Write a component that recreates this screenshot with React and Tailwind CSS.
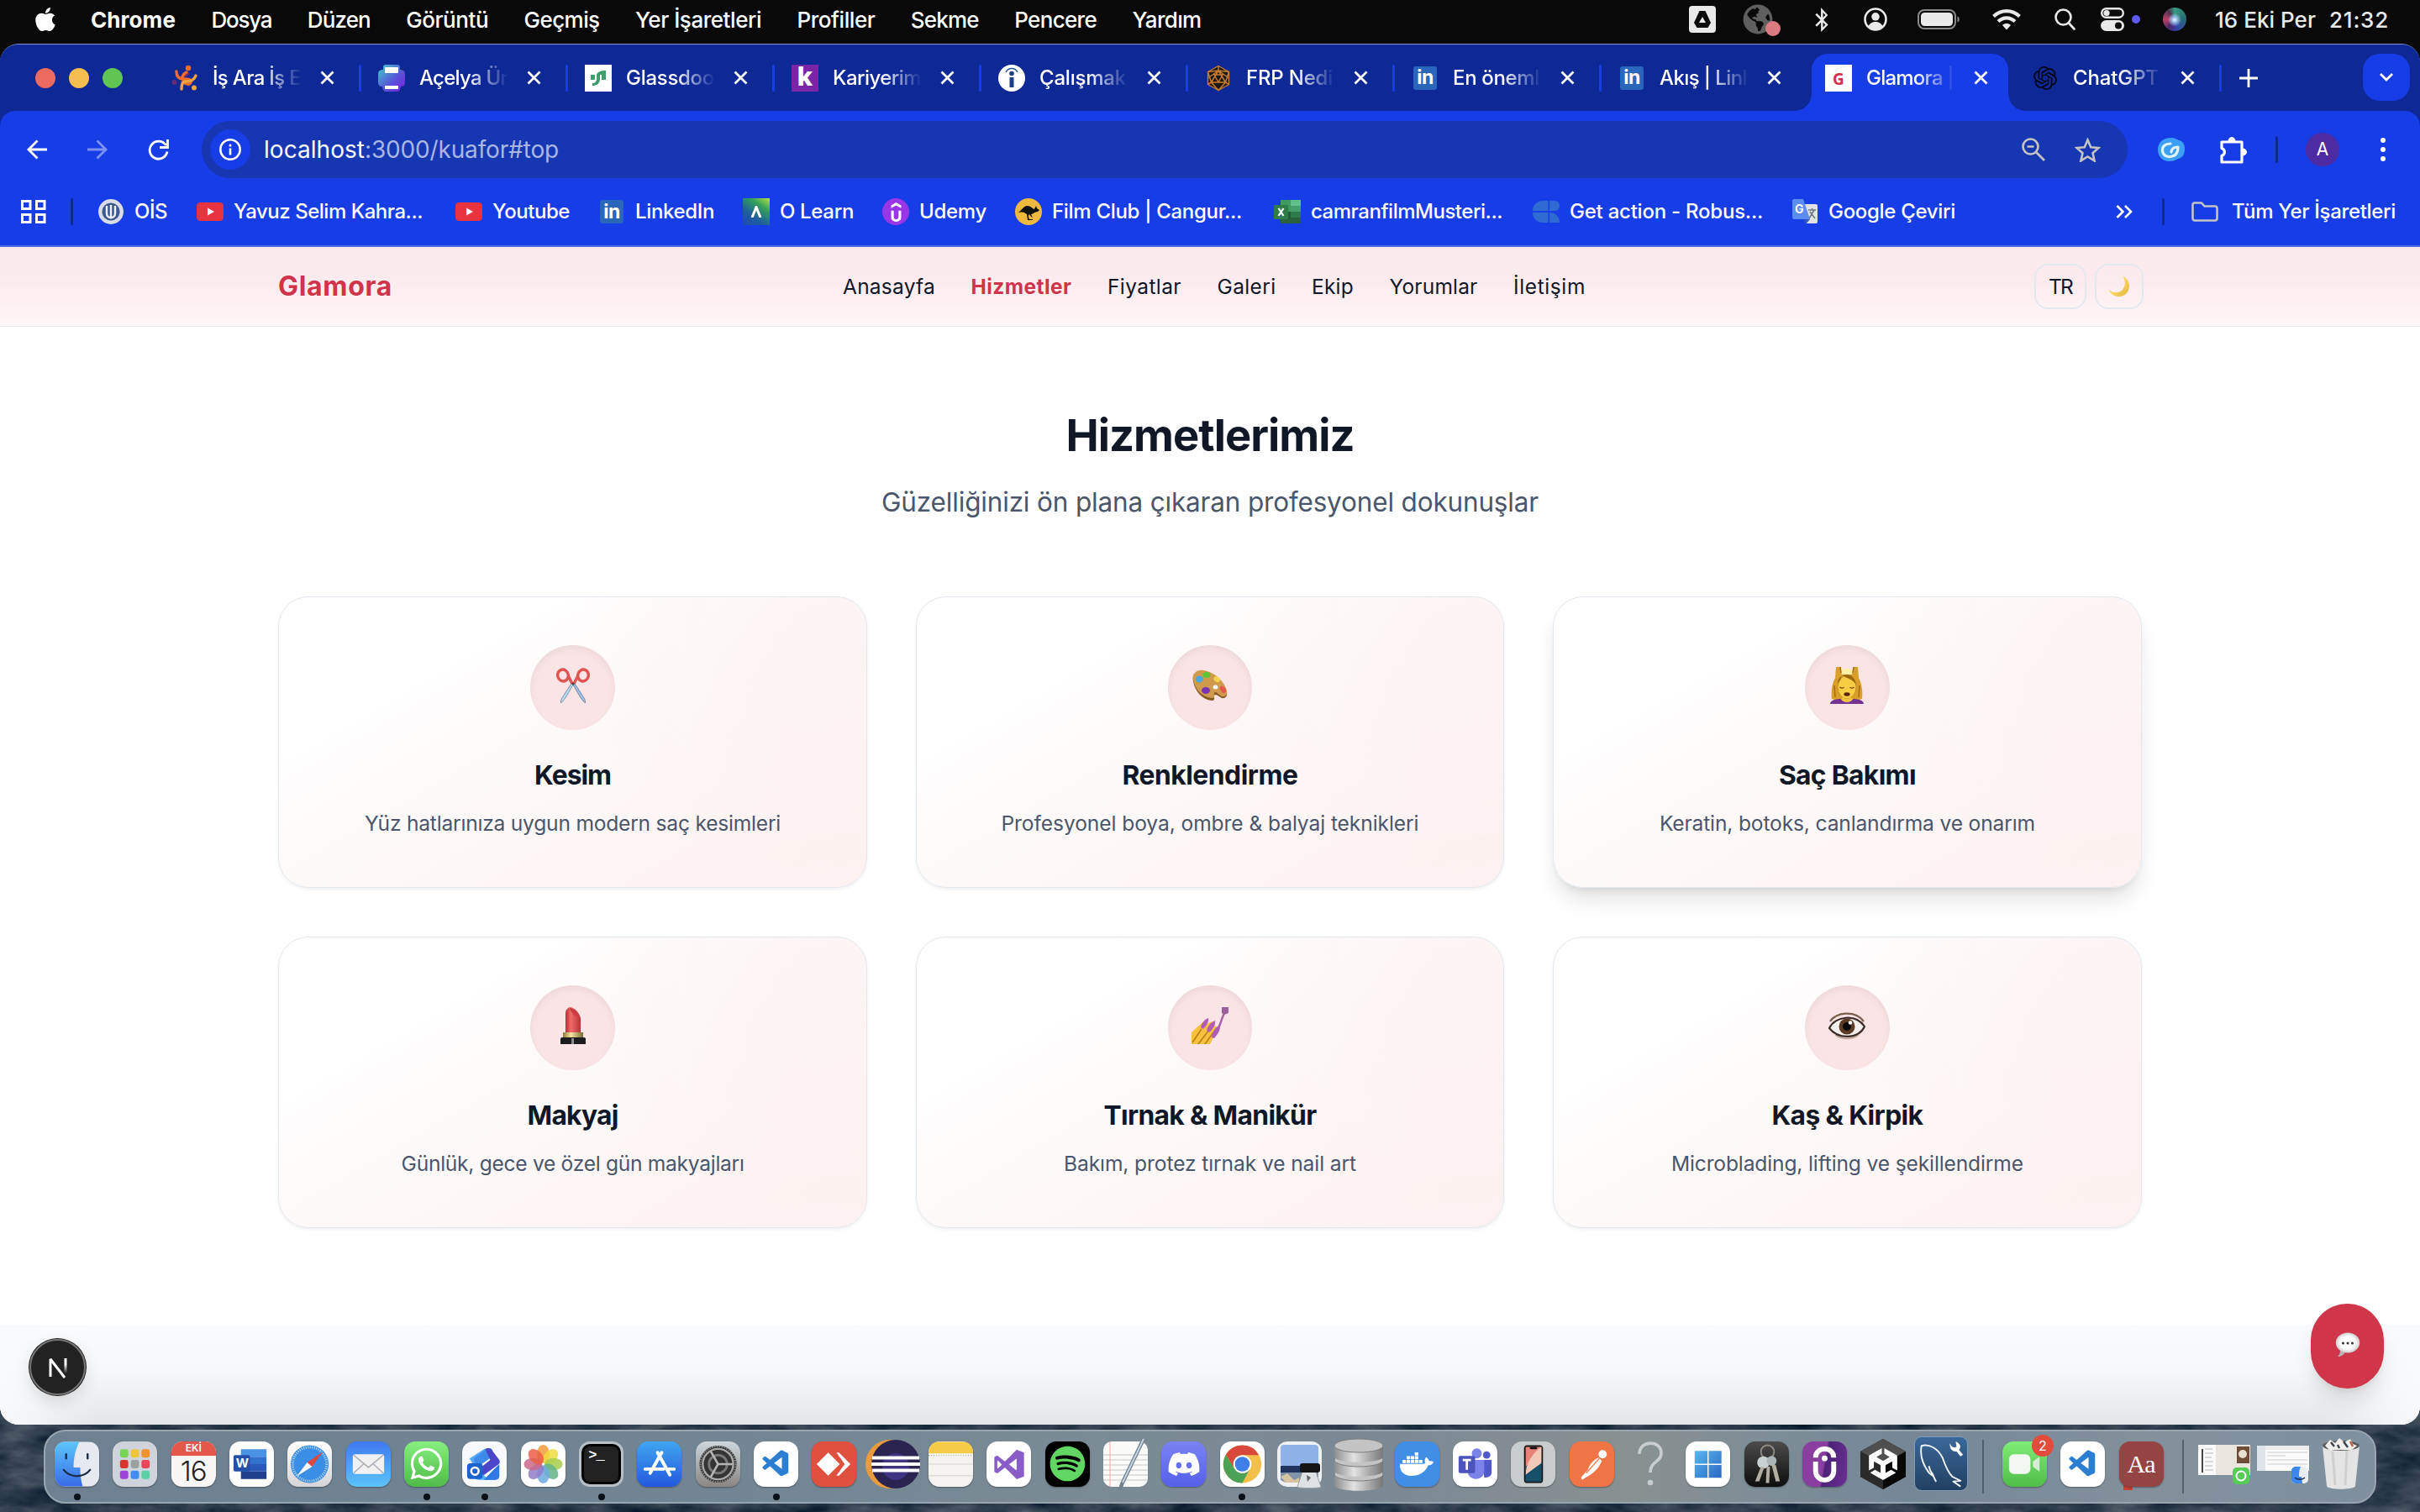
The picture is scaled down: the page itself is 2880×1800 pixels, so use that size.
import { useLayoutEffect, useRef, useState } from "react";
import { FaApple, FaWhatsapp, FaSpotify, FaDiscord, FaDocker, FaBluetoothB, FaGlobeAmericas } from "react-icons/fa";
import { SiOpenai, SiUdemy, SiUnity } from "react-icons/si";
import { VscVscode } from "react-icons/vsc";
import { DiVisualstudio } from "react-icons/di";

// One-line label whose tracking is tuned so that it fills the width `w`.
function Label({ w, className = "", children }) {
  const ref = useRef(null);
  const [spacing, setSpacing] = useState(0);
  useLayoutEffect(() => {
    const natural = ref.current.getBoundingClientRect().width;
    setSpacing((w - natural) / ref.current.textContent.length);
  }, [w]);
  return (
    <span ref={ref} className={"inline-block shrink-0 whitespace-nowrap " + className} style={{ letterSpacing: spacing + "px" }}>
      {children}
    </span>
  );
}

/* ---------- menu bar ---------- */

const menus = [
  ["Dosya", 72], ["Düzen", 75], ["Görüntü", 98], ["Geçmiş", 90], ["Yer İşaretleri", 150],
  ["Profiller", 93], ["Sekme", 81], ["Pencere", 98], ["Yardım", 82],
];

function MenuBar() {
  return (
    <div className="flex h-[52px] shrink-0 items-center bg-[#090909] pb-[6px] text-[26px] text-white">
      <FaApple className="ml-[38px] h-[32px] w-[32px] shrink-0" />
      <Label w={101} className="ml-[38px] font-bold">Chrome</Label>
      {menus.map(([t, w]) => <Label key={t} w={w} className="ml-[42.400px] font-medium">{t}</Label>)}
      <div className="ml-auto flex items-center pr-[37px] text-[#e9e9e9]">
        <svg viewBox="0 0 32 32" className="h-8 w-8"><rect width="32" height="32" rx="4" fill="#e9e9e9" /><path d="M12.500 6h7l6.500 14-3.500 6h-13L6 20z" fill="#090909" /><path d="M16 13l4 7h-8z" fill="#e9e9e9" /></svg>
        <span className="relative ml-8 block h-9 w-[45px]">
          <FaGlobeAmericas className="h-9 w-9 text-[#5f5f5f]" />
          <span className="absolute -bottom-[2px] right-0 h-[18px] w-[18px] rounded-full bg-[#d97b80]" />
        </span>
        <FaBluetoothB className="ml-[37px] h-[29px] w-[24px]" />
        <svg viewBox="0 0 28 28" className="ml-[38px] h-7 w-7"><circle cx="14" cy="14" r="12.500" fill="none" stroke="currentColor" strokeWidth="2.600" /><circle cx="14" cy="10.800" r="4.800" fill="currentColor" /><path d="M5.500 22.500c1.500-4 5-5.500 8.500-5.500s7 1.500 8.500 5.500c-4 4.500-13 4.500-17 0z" fill="currentColor" /></svg>
        <svg viewBox="0 0 51 24" className="ml-[36px] h-6 w-[51px]"><rect x="1" y="1" width="44" height="22" rx="7" fill="none" stroke="#8a8a8a" strokeWidth="2" /><rect x="4" y="4" width="38" height="16" rx="4.500" fill="#e9e9e9" /><path d="M47.500 8.500c3 .5 3 6.500 0 7z" fill="#8a8a8a" /></svg>
        <svg viewBox="0 0 34 26" className="ml-[38px] h-[26px] w-[34px]" fill="none" stroke="currentColor" strokeWidth="4.200"><path d="M1.500 9.500c9-8.500 22-8.500 31 0" /><path d="M7 15.500c6-5.500 14-5.500 20 0" /><path d="M17 25.500l-5-5.500c3-2.600 7-2.600 10 0z" fill="currentColor" stroke="none" /></svg>
        <svg viewBox="0 0 25 26" className="ml-[40px] h-[26px] w-[25px]" fill="none" stroke="currentColor" strokeWidth="2.600" strokeLinecap="round"><circle cx="10.500" cy="10.500" r="9" /><path d="M17 17.500l6.500 7" /></svg>
        <svg viewBox="0 0 28 28" className="ml-[30px] h-7 w-7"><rect x="1.200" y="1.200" width="25.600" height="10.600" rx="5.300" fill="none" stroke="currentColor" strokeWidth="2.400" /><circle cx="7" cy="6.500" r="3.600" fill="currentColor" /><rect y="15" width="28" height="13" rx="6.500" fill="currentColor" /><circle cx="21" cy="21.500" r="4" fill="#090909" /></svg>
        <span className="ml-[9px] h-[10px] w-[10px] rounded-full bg-[#6059ee]" />
        <span className="ml-[27px] h-7 w-7 rounded-full bg-[radial-gradient(circle_at_50%_52%,#f4f8ff_0%,#9cc3ee_14%,transparent_40%),conic-gradient(from_0deg,#3a9a7f,#246a72_25%,#3346a8_45%,#4a2768_60%,#c03f66_75%,#4a3350_90%,#3a9a7f)]" />
        <Label w={120} className="ml-[34px] font-medium">16 Eki Per</Label>
        <Label w={71} className="ml-[16px] font-medium">21:32</Label>
      </div>
    </div>
  );
}

/* ---------- tab strip ---------- */

const LinkedIn = () => (
  <span className="mx-[2px] flex h-7 w-7 items-center justify-center rounded-[3px] bg-[#2a67bc] text-[23px] font-bold leading-none tracking-tight text-white">in</span>
);

const favicons = {
  runner: (
    <svg viewBox="0 0 32 32" className="h-8 w-8" fill="none" strokeLinecap="round"><circle cx="20" cy="4" r="3.200" fill="#ee6d2d" /><circle cx="3.500" cy="21" r="3" fill="#6b2b72" /><circle cx="27" cy="27.500" r="3" fill="#f0a63c" /><path d="M20 11c-6 3-9 8-8 19" stroke="#6b2b72" strokeWidth="2.600" /><path d="M6 8c0 6 3 9 8 9 6 0 10 0 9 4-1 3-5 3-8 0-3-4-3-9 3-12" stroke="#ee6d2d" strokeWidth="3.400" /><path d="M29 13c-2 6-7 7-12 7-4 0-5 4-5 9" stroke="#f0a63c" strokeWidth="3.400" /></svg>
  ),
  printer: (
    <svg viewBox="0 0 32 32" className="h-8 w-8"><defs><linearGradient id="prn" x1="0" y1="0" x2="1" y2="1"><stop offset="0" stopColor="#3fd0c9" /><stop offset=".55" stopColor="#5757d8" /><stop offset="1" stopColor="#7a1fe0" /></linearGradient></defs><path d="M9 0h14q3 0 3 3v3q6 0 6 5v10q0 5-5 5-1 6-4 6H9q-3 0-4-6-5 0-5-5V11q0-5 6-5V3q0-3 3-3z" fill="url(#prn)" /><rect x="8" y="3" width="16" height="7" rx="1" fill="#fff" /><rect x="8" y="25" width="16" height="4" rx="1" fill="#fff" /></svg>
  ),
  glassdoor: (
    <svg viewBox="0 0 32 32" className="h-8 w-8"><rect width="32" height="32" fill="#fff" /><path d="M7 12h5v6h2v-6c1-3 4-5 11-5v11h-5v-6h-2v6c-1 5-4 7-9 7v-3c3 0 4-1 5-4H7z" fill="#3f9e69" /></svg>
  ),
  kariyer: <span className="flex h-8 w-8 items-center justify-center bg-[#7a24a8] pb-1 text-[31px] font-extrabold leading-none text-white">k</span>,
  info: (
    <svg viewBox="0 0 32 32" className="h-8 w-8"><circle cx="16" cy="16" r="16" fill="#fff" /><path d="M9 9c3-6 11-6 14 0" fill="none" stroke="#27549b" strokeWidth="1.500" /><circle cx="16" cy="10.500" r="2.800" fill="#1d3f86" /><path d="M13.500 15h5v12h-5z" fill="#1d3f86" /></svg>
  ),
  dice: (
    <svg viewBox="0 0 32 32" className="h-8 w-8" strokeLinejoin="round"><path d="M16 1.500l12.500 7v15L16 30.500 3.500 23.500v-15z" fill="#1d1510" stroke="#c67c30" strokeWidth="1.400" /><path d="M16 7l8.500 14h-17zM16 1v6M3.500 8.500L16 7l12.500 1.500M3.500 8.500L7.500 21l-4 2.500M28.500 8.500L24.500 21l4 2.500M7.500 21L16 30.500 24.500 21M11 12h10l-5 9zM3.500 16L16 7l12.500 9" fill="none" stroke="#c67c30" strokeWidth="1.500" /></svg>
  ),
  linkedin: <LinkedIn />,
  glamora: <span className="flex h-8 w-8 items-center justify-center bg-white pt-1 font-['Noto_Sans'] text-[19px] font-bold leading-none text-[#d0344b]">G</span>,
  openai: <SiOpenai className="ml-[2px] h-7 w-7 text-[#020617]" />,
};

const tabs = [
  ["runner", "İş Ara İş E", 105, true], ["printer", "Açelya Ür", 105, true], ["glassdoor", "Glassdoo", 105, true],
  ["kariyer", "Kariyerim", 105, true], ["info", "Çalışmak", 103, true], ["dice", "FRP Nedi", 103, true],
  ["linkedin", "En öneml", 103, true], ["linkedin", "Akış | Linl", 104, false], ["glamora", "Glamora |", 104, false], ["openai", "ChatGPT", 102, true],
];

function Tab({ icon, title, width, divider, active }) {
  return (
    <div className="relative flex h-full w-[246px] shrink-0 items-center pl-[22px]">
      {active && (
        <svg viewBox="0 0 282 68" className="absolute -left-[18px] bottom-0 h-[68px] w-[282px] fill-[#173de6]"><path d="M0 68c16 0 24-8 24-24V20C24 8 32 0 44 0h194c12 0 20 8 20 20v24c0 16 8 24 24 24z" /></svg>
      )}
      <span className="relative flex w-8 shrink-0">{favicons[icon]}</span>
      <span className="relative ml-[17px] flex w-[106px] text-[24px] font-medium [mask-image:linear-gradient(to_right,#000_55%,transparent_100%)]"><Label w={width}>{title}</Label></span>
      <svg viewBox="0 0 17 17" className="relative ml-[22px] h-[17px] w-[17px] stroke-white" strokeWidth="2.800"><path d="M1.500 1.500l14 14M15.500 1.500l-14 14" /></svg>
      {divider && <span className="ml-auto h-8 w-[3px] translate-x-[2px] rounded bg-[#173de6]" />}
    </div>
  );
}

function TabStrip() {
  return (
    <div className="flex h-[79px] shrink-0 bg-[#0e2896] text-white">
      <div className="flex w-[182px] shrink-0 items-center gap-4 pl-[42px]">
        <span className="h-6 w-6 rounded-full bg-[#ed6a5f]" />
        <span className="h-6 w-6 rounded-full bg-[#f5bf4f]" />
        <span className="h-6 w-6 rounded-full bg-[#61c554]" />
      </div>
      {tabs.map(([icon, title, width, divider], i) => <Tab key={title} icon={icon} title={title} width={width} divider={divider} active={i === 8} />)}
      <svg viewBox="0 0 22 22" className="ml-[23px] h-[22px] w-[22px] self-center stroke-white" strokeWidth="2.800"><path d="M11 0v22M0 11h22" /></svg>
      <span className="ml-auto mr-3 mt-[11px] flex h-14 w-14 items-center justify-center rounded-[20px] bg-[#173de6]">
        <svg viewBox="0 0 16 10" className="h-[10px] w-4 fill-none stroke-white" strokeWidth="2.800"><path d="M1 1l7 7 7-7" /></svg>
      </span>
    </div>
  );
}

/* ---------- toolbar ---------- */

function Toolbar() {
  return (
    <div className="flex h-[92px] items-center text-white">
      <svg viewBox="0 0 24 24" className="ml-8 h-6 w-6 fill-none stroke-white" strokeWidth="2.800"><path d="M24 12H2M12.500 1.500L2 12l10.500 10.500" /></svg>
      <svg viewBox="0 0 24 24" className="ml-12 h-6 w-6 fill-none stroke-[#7c92f2]" strokeWidth="2.800"><path d="M0 12h22M11.500 1.500L22 12 11.500 22.500" /></svg>
      <svg viewBox="0 0 25 25" className="ml-12 h-[25px] w-[25px] fill-none stroke-white" strokeWidth="2.800"><path d="M21.500 7A10.500 10.500 0 1 0 23 14.500" /><path d="M23.500 0v9.500H14" /></svg>
      <div className="ml-[39px] flex h-[68px] w-[2292px] items-center rounded-full bg-[#1736b2]">
        <span className="ml-[10px] flex h-12 w-12 items-center justify-center rounded-full bg-[#173de6]">
          <svg viewBox="0 0 26 26" className="h-[26px] w-[26px]"><circle cx="13" cy="13" r="11.700" fill="none" stroke="#fff" strokeWidth="2.500" /><path d="M11.700 11.500h2.600v8h-2.600zM11.700 6.800h2.600v2.700h-2.600z" fill="#fff" /></svg>
        </span>
        <span className="ml-[16px] flex text-[28px]"><Label w={120}>localhost</Label><Label w={231} className="text-[#aab6e4]">:3000/kuafor#top</Label></span>
        <svg viewBox="0 0 28 28" className="ml-auto h-7 w-7 fill-none stroke-[#c4c4c4]" strokeWidth="2.700"><circle cx="10.500" cy="10.500" r="9" /><path d="M17 17l10 10M6.500 10.500h8" /></svg>
        <svg viewBox="0 0 31 29" className="ml-[35px] mr-8 h-[29px] w-[31px] fill-none stroke-[#c4c4c4]" strokeWidth="2.600"><path d="M15.500 2.500l3.700 8.700 9.300.8-7 6.200 2.100 9.200-8.100-4.900-8.100 4.900 2.100-9.200-7-6.200 9.300-.8z" /></svg>
      </div>
      <svg viewBox="0 0 32 28" className="ml-9 h-7 w-8"><path d="M16 0c4 0 7 2 9 3 5 1 7 5 7 10 0 6-2 11-8 12-3 2-6 3-10 3C5 28 0 22 0 14S6 0 16 0z" fill="#3ba0f5" /><path d="M15 7C9 7 5 10 5.500 15.500c.5 5 5 7.500 9.500 7 6-.7 9-5 9-11.500-4.500 0-7.500 2-8 6" fill="none" stroke="#dff2ff" strokeWidth="3.200" strokeLinecap="round" strokeLinejoin="round" /></svg>
      <svg viewBox="0 0 34 34" className="ml-[41px] h-[34px] w-[34px] fill-none stroke-white" strokeWidth="3.200" strokeLinejoin="round"><path d="M3 8h24v24H3v-7.500c4.500-1.500 4.500-7.500 0-9z" /><path d="M11 7c0-6 8-6 8 0zM28 16c6 0 6 8 0 8z" fill="#fff" strokeWidth="1" /></svg>
      <span className="ml-[33px] h-8 w-[3px] rounded bg-[#0e2896]" />
      <span className="ml-[33px] flex h-10 w-10 items-center justify-center rounded-full bg-[#4d2ba3] text-[21px]">A</span>
      <span className="ml-[49px] flex flex-col gap-[5px]">
        <i className="h-[6px] w-[6px] rounded-full bg-white" /><i className="h-[6px] w-[6px] rounded-full bg-white" /><i className="h-[6px] w-[6px] rounded-full bg-white" />
      </span>
    </div>
  );
}

const YouTube = () => (
  <svg viewBox="0 0 32 22" className="h-[22px] w-8"><rect width="32" height="22" rx="4.500" fill="#ea3340" /><path d="M13 6.500l8 4.500-8 4.500z" fill="#fff" /></svg>
);

const bookmarks = [
  ["OİS", 39, 39, <svg viewBox="0 0 32 32" className="h-8 w-8"><circle cx="16" cy="16" r="15" fill="#d7dce6" /><circle cx="16" cy="16" r="10.500" fill="#3b5a93" /><path d="M11 9v9c0 7 10 7 10 0V9M16 8v16" fill="none" stroke="#eef1f7" strokeWidth="2.400" /></svg>],
  ["Yavuz Selim Kahra...", 225, 229, <YouTube />],
  ["Youtube", 92, 91, <YouTube />],
  ["LinkedIn", 94, 93, <LinkedIn />],
  ["O Learn", 88, 87, <span className="flex h-8 w-8 items-center justify-center bg-[linear-gradient(215deg,#b7e33f,#33a05a_30%,#1f5e9c_65%,#1f49b4)]"><svg viewBox="0 0 14 14" className="h-[14px] w-[14px] fill-none stroke-white" strokeWidth="3"><path d="M2 14L7 1.500 12 14" /></svg></span>],
  ["Udemy", 80, 79, <span className="flex h-8 w-8 items-center justify-center rounded-full bg-[#9a36e8]"><SiUdemy className="h-[23px] w-[23px]" /></span>],
  ["Film Club | Cangur...", 226, 229, <svg viewBox="0 0 32 32" className="h-8 w-8"><circle cx="16" cy="16" r="16" fill="#efb940" /><path d="M3 17c4-1 6-7 11-8 5 0 6 3 9 4l2-4 1 3 3 2-2 2c-4 0-5 3-8 3l2 4-2-1-2-3c-2 2-1 4 0 6h4v1h-6l-1-7c-4-3-5-3-11-2z" fill="#111" /></svg>],
  ["camranfilmMusteri...", 228, 229, <svg viewBox="0 0 32 32" className="h-8 w-8"><path d="M8 2h12v14H8z" fill="#3f9a5f" /><path d="M20 2h12v14H20z" fill="#5fc08a" /><path d="M20 9h12v7H20z" fill="#459f68" /><path d="M8 16h12v14H8z" fill="#235c3a" /><path d="M20 16h12v7H20z" fill="#2f7a49" /><path d="M20 23h12v7H20zM8 24h12v6H8z" fill="#29613a" /><rect y="8" width="17" height="17" rx="1.500" fill="#2e7d46" /><path d="M5.500 12l6 9M11.500 12l-6 9" stroke="#fff" strokeWidth="2.200" /></svg>],
  ["Get action - Robus...", 230, 229, <svg viewBox="0 0 32 26" className="h-[26px] w-8 fill-[#2f6bd0]"><path d="M18.500 0H12C5 0 0 5 0 12h18.500zM20 0h6c4 0 6 3 6 6s-2 6-6 6h-6zM18.500 14H0c0 7 5 12 12 12h6.500zM20 14c7 0 12 5 12 12H20z" /></svg>],
  ["Google Çeviri", 151, 151, <svg viewBox="0 0 32 32" className="h-8 w-8"><path d="M14 7h15a2 2 0 0 1 2 2v19a2 2 0 0 1-2 2H18z" fill="#dfe1e5" /><path d="M3 1h11l8 24H3a2 2 0 0 1-2-2V3a2 2 0 0 1 2-2z" fill="#5b8df0" /><path d="M22 25l-5 6-2-6z" fill="#2c57b8" /><text x="4" y="18" fontSize="14" fontWeight="700" fill="#fff">G</text><path d="M20 14h9M24.500 12v2M21 24l6-10M22 16l6 8" stroke="#70777f" strokeWidth="1.500" /></svg>],
];

function Bookmarks() {
  return (
    <div className="flex h-[56px] items-center text-[24px] font-medium text-white">
      <svg viewBox="0 0 30 28" className="ml-[25px] h-7 w-[30px] fill-none stroke-white" strokeWidth="3"><path d="M1.500 1.500h9.500v9h-9.500zM18.500 1.500H28v9h-9.500zM1.500 17.500h9.500v9h-9.500zM18.500 17.500H28v9h-9.500z" /></svg>
      <span className="ml-[29px] mr-[29px] h-8 w-[3px] rounded bg-[#0e2896]" />
      <div className="flex gap-[34px]">
        {bookmarks.map(([t, w, box, icon]) => (
          <span key={t} className="flex items-center">
            <span className="flex w-8 shrink-0">{icon}</span>
            <span className="ml-[12px] mr-px flex" style={{ width: box }}><Label w={w}>{t}</Label></span>
          </span>
        ))}
      </div>
      <svg viewBox="0 0 20 16" className="ml-auto h-4 w-5 fill-none stroke-white" strokeWidth="2.600"><path d="M1.500 1l7 7-7 7M11 1l7 7-7 7" /></svg>
      <span className="ml-[35px] h-8 w-[3px] rounded bg-[#0e2896]" />
      <svg viewBox="0 0 32 24" className="ml-[32px] h-6 w-8 fill-none stroke-[#c4c4c4]" strokeWidth="2.600" strokeLinejoin="round"><path d="M1.500 20V3.500a2 2 0 0 1 2-2H12l3.500 4H28a2.500 2.500 0 0 1 2.500 2.500v12a2.500 2.500 0 0 1-2.500 2.500H4A2.500 2.500 0 0 1 1.500 20z" /></svg>
      <Label w={195} className="ml-[16px] mr-[29px]">Tüm Yer İşaretleri</Label>
    </div>
  );
}

/* ---------- page ---------- */

const links = [["Anasayfa", 110], ["Hizmetler", 120], ["Fiyatlar", 88], ["Galeri", 70], ["Ekip", 50], ["Yorumlar", 105], ["İletişim", 86]];

function SiteNav() {
  return (
    <nav className="flex h-[95px] shrink-0 items-center border-b border-[#e5e9f0] bg-[linear-gradient(#fbe9ec,#fcebee_45%,#fef7f8)] pr-[329px] pl-[331px] text-[24.500px] text-[#101828]">
      <div className="w-[672px]"><Label w={136} className="text-[32px] font-bold text-[#d0344b]">Glamora</Label></div>
      <div className="flex gap-[42.500px]">
        {links.map(([t, w]) => <Label key={t} w={w} className={t === "Hizmetler" ? "font-bold text-[#d0344b]" : ""}>{t}</Label>)}
      </div>
      <div className="ml-auto flex gap-[10px]">
        <span className="flex h-[54px] w-[62px] items-center justify-center rounded-[16px] border-2 border-[#e2e8f0]"><Label w={28}>TR</Label></span>
        <span className="flex h-[54px] w-[58px] items-center justify-center rounded-[16px] border-2 border-[#e2e8f0]">
          <svg viewBox="0 0 26 26" className="h-[26px] w-[26px]"><defs><linearGradient id="moon" x1="0" y1="0" x2="1" y2="1"><stop offset=".4" stopColor="#f9dc6c" /><stop offset="1" stopColor="#e5b23c" /></linearGradient></defs><path d="M17 .5c5 2.500 8.500 7 8 13C24.500 20 19.500 25 13 25 7 25 2 21.500.5 16.500 4 20 8.500 21 13 19.500 20 17 22 8 17 .5z" fill="url(#moon)" /></svg>
        </span>
      </div>
    </nav>
  );
}

const emoji = {
  scissors: (
    <svg viewBox="0 0 42 42" className="h-[42px] w-[42px]"><path d="M22.500 18L31 31c2 4 5 6 4.500 11C30 37 26 29 20.500 19z" fill="#9cbfe2" stroke="#66798f" strokeWidth=".8" /><path d="M19.500 18L11 31C9 35 6 37 6.500 42 12 37 16 29 21.500 19z" fill="#b9dbf0" stroke="#66798f" strokeWidth=".8" /><g fill="none" stroke="#e05452" strokeWidth="3.400"><ellipse cx="9" cy="9" rx="6.300" ry="7" transform="rotate(-15 9 9)" /><ellipse cx="33" cy="9" rx="6.300" ry="7" transform="rotate(15 33 9)" /><path d="M15 9l5 10M27 9l-5 10" /></g><circle cx="21" cy="19" r="1.500" fill="#444" /></svg>
  ),
  palette: (
    <svg viewBox="0 0 42 42" className="h-[42px] w-[42px]"><path d="M1 16C-1 7 7 2 16 4.500 28 8 38 17 41 29c1 5-2 8-6 7-4-2-7-6-9-3 0 3 1 6-3 6C12 38 3 28 1 16z" fill="#8a5a25" /><path d="M1 14C-1 6 7 1 16 3.500 28 7 38 16 41 27c1 5-2 8-6 7-4-2-7-7-9-4 0 3 1 6-3 6C12 35 3 26 1 14z" fill="#cf9a4c" /><ellipse cx="27.500" cy="23" rx="3" ry="2.500" fill="#fff" /><ellipse cx="17" cy="8.500" rx="4.500" ry="3.500" fill="#5cc637" /><ellipse cx="8.500" cy="13.500" rx="4.500" ry="4" fill="#4ba7dc" /><ellipse cx="29.500" cy="13.500" rx="4" ry="3" fill="#f3d34c" transform="rotate(30 29 13)" /><ellipse cx="36.500" cy="26" rx="3" ry="4.500" fill="#e6584a" transform="rotate(-35 36 26)" /><ellipse cx="16" cy="27" rx="5" ry="4" fill="#7b33b5" /></svg>
  ),
  massage: (
    <svg viewBox="0 0 42 44" className="h-[44px] w-[42px]"><path d="M8 0h5l1 7c4-3 10-3 14 0l1-7h5l1 13c4 7 5 18 4 25l-8 2H10l-7-2C2 30 3 20 7 13z" fill="#d99f2a" /><path d="M14 4c4-3 10-3 14 0l-1 5H15z" fill="#fdf0a5" /><path d="M13 0l1 7M29 0l-1 7M6 22l1 14M36 22l-1 14" stroke="#a96a10" strokeWidth="1.500" fill="none" /><ellipse cx="21" cy="24" rx="11" ry="14" fill="#f7cd45" stroke="#b98318" strokeWidth=".8" /><path d="M10 20c3-3 5-9 5-10 4 3 14 4 17 12-1-8-5-13-11-13S10 13 10 20z" fill="#9a6810" /><path d="M12.500 24c1.500 1.600 4 1.600 5 0M24.500 24c1 1.600 3.500 1.600 5 0" stroke="#6d4a0b" strokeWidth="1.300" fill="none" /><ellipse cx="21" cy="32.500" rx="3.600" ry="2.200" fill="#5a2308" /><path d="M1 44c0-4 6-6 13-6 2 5 12 5 14 0 7 0 13 2 13 6z" fill="#74348f" /><path d="M14 38c2 5 12 5 14 0l-3-2c-2 3-6 3-8 0z" fill="#f0c23c" /></svg>
  ),
  lipstick: (
    <svg viewBox="0 0 32 44" className="h-[44px] w-8"><defs><linearGradient id="lip"><stop stopColor="#b42a33" /><stop offset=".35" stopColor="#ee6b68" /><stop offset="1" stopColor="#b9333a" /></linearGradient><linearGradient id="gold"><stop stopColor="#8c7733" /><stop offset=".4" stopColor="#f4e6a1" /><stop offset="1" stopColor="#7a6830" /></linearGradient></defs><path d="M7 31V8c0-5 3-8 6-8 5 1 10 6 12 13v18z" fill="url(#lip)" /><path d="M12 1c5 0 10 5 12 11-5 0-10-4-12-11z" fill="#cd3b42" /><path d="M4 30h24v8H4z" fill="url(#gold)" /><path d="M1 38c0-2 2-2 3-2h24c1 0 3 0 3 2v6H1z" fill="#1d1c1e" /><path d="M14 37h3v7h-3z" fill="#8d8d8d" /></svg>
  ),
  nails: (
    <svg viewBox="0 0 44 44" className="h-[44px] w-11"><path d="M0 30C5 25 11 20 15 17c3 0 3 3 1 6 4-5 8-7 11-5l-2 5c4-2 6 0 5 5l-6 12-2 4H0z" fill="#f5c13e" /><path d="M1 42l11-16M8 44l13-17M16 44l10-14" stroke="#bb7b18" strokeWidth="1.500" /><g fill="#b35db8"><path d="M11 24c1-5 4-9 9-11 1 4-2 9-6 13z" /><path d="M18 28c1-5 5-10 10-12 1 4-2 10-7 14z" /><path d="M24 36c0-6 4-12 10-15 1 5-3 12-7 16z" /></g><path d="M31 28L38.500 8" stroke="#a95fa9" strokeWidth="2.400" /><path d="M36 0h8v7l-5 2-3-2z" fill="#9c5f9c" /></svg>
  ),
  eye: (
    <svg viewBox="0 0 44 34" className="h-[34px] w-11"><path d="M2 12C8 1 32-2 42 12" fill="none" stroke="#7b5f4c" strokeWidth="2.200" /><path d="M1 20C8 6 32 2 43 18 36 33 12 34 1 20z" fill="#f2eeed" stroke="#3c2b26" strokeWidth="2.200" /><circle cx="22" cy="18" r="9.500" fill="#5d3a23" /><circle cx="22" cy="18" r="5" fill="#0c0908" /><circle cx="26" cy="13.500" r="2.200" fill="#fff" /><path d="M8 28c8 6 20 6 28 0" fill="none" stroke="#b59a8a" strokeWidth="1.500" /></svg>
  ),
};

const services = [
  ["scissors", "Kesim", 91, "Yüz hatlarınıza uygun modern saç kesimleri", 495],
  ["palette", "Renklendirme", 209, "Profesyonel boya, ombre & balyaj teknikleri", 497],
  ["massage", "Saç Bakımı", 163, "Keratin, botoks, canlandırma ve onarım", 447],
  ["lipstick", "Makyaj", 108, "Günlük, gece ve özel gün makyajları", 408],
  ["nails", "Tırnak & Manikür", 253, "Bakım, protez tırnak ve nail art", 348],
  ["eye", "Kaş & Kirpik", 180, "Microblading, lifting ve şekillendirme", 419],
];

function ServiceCard({ icon, title, titleW, text, textW, raised }) {
  return (
    <div className={"flex h-[347.400px] flex-col items-center rounded-[36px] border border-[#e2e8f0] bg-[radial-gradient(circle_at_92%_14%,#fbe6e940,#fbe6e900_280px),linear-gradient(150deg,#fff_15%,#fef9f9_50%,#fdf2f1_90%)] pt-[57px] " + (raised ? "shadow-[0_18px_27px_-5px_rgba(0,0,0,0.12),0_7px_11px_-7px_rgba(0,0,0,0.12)]" : "shadow-[0_2px_4px_0_rgba(0,0,0,0.06)]")}>
      <div className="flex h-[100.800px] w-[100.800px] shrink-0 items-center justify-center rounded-full bg-[#fae4e6] pb-1 shadow-[inset_0_4px_8px_0_rgba(0,0,0,0.06)]">{emoji[icon]}</div>
      <h3 className="mt-[28.800px] flex text-[31.800px] font-bold leading-[50.400px] text-[#101828]"><Label w={titleW}>{title}</Label></h3>
      <p className="mt-[14.400px] flex text-[24.600px] leading-[36px] text-[#4a566b]"><Label w={textW}>{text}</Label></p>
    </div>
  );
}

function Page() {
  return (
    <div className="relative flex grow flex-col bg-white">
      <SiteNav />
      <section className="flex h-[1188px] flex-col items-center">
        <h2 className="mt-[97px] text-[52.500px] font-bold leading-[64px] text-[#101828]"><Label w={343}>Hizmetlerimiz</Label></h2>
        <p className="mt-[22px] text-[31.500px] leading-[52px] text-[#4a566b]"><Label w={782}>Güzelliğinizi ön plana çıkaran profesyonel dokunuşlar</Label></p>
        <div className="mt-[86px] grid w-[2217.600px] grid-cols-3 gap-[57.600px]">
          {services.map(([icon, title, titleW, text, textW], i) => (
            <ServiceCard key={title} icon={icon} title={title} titleW={titleW} text={text} textW={textW} raised={i === 2} />
          ))}
        </div>
      </section>
      <div className="grow bg-[linear-gradient(to_right,#f8fafcff,#f8fafc00_4%,#f8fafc00_96%,#f8fafcff),linear-gradient(#fafbfd,#f6f8fa_45%,#e3e5e7)]" />
      <span className="absolute bottom-[35px] left-[35px] flex h-[67px] w-[67px] items-center justify-center rounded-full border-2 border-[#777] bg-[#222] shadow-[0_0_0_1px_#1d1d1d,0_8px_20px_rgba(0,0,0,0.12)]">
        <svg viewBox="0 0 26 26" className="h-[26px] w-[26px] fill-none" strokeWidth="3"><defs><linearGradient id="nx" x1="0" y1="0" x2="0" y2="1"><stop offset=".4" stopColor="#fff" /><stop offset="1" stopColor="#fff" stopOpacity="0" /></linearGradient></defs><path d="M4 24V3l17 22" stroke="#fff" strokeLinejoin="bevel" /><path d="M20.500 2h3v18h-3z" fill="url(#nx)" /></svg>
      </span>
      <span className="absolute bottom-[43px] right-[43px] flex h-[101px] w-[87px] items-center justify-center rounded-full bg-[#cf364a] pb-[4px] shadow-[0_18px_27px_-5px_rgba(0,0,0,0.12),0_7px_11px_-7px_rgba(0,0,0,0.12)]">
        <svg viewBox="0 0 30 30" className="h-[30px] w-[30px]"><defs><radialGradient id="bub"><stop offset=".6" stopColor="#fff" /><stop offset="1" stopColor="#cfcfcf" /></radialGradient></defs><path d="M6 22c0 3-1 5-3 7 4 0 7-2 9-5" fill="#b9b3b5" /><ellipse cx="15" cy="12.500" rx="14.200" ry="12" fill="url(#bub)" /><g fill="#333"><circle cx="9.500" cy="13" r="1.500" /><circle cx="15" cy="13" r="1.500" /><circle cx="20.500" cy="13" r="1.500" /></g></svg>
      </span>
    </div>
  );
}

/* ---------- dock ---------- */

const Tile = ({ className = "", children }) => (
  <span className={"flex h-[54px] w-[53px] items-center justify-center overflow-hidden rounded-[13px] shadow-[0_1px_2px_rgba(0,0,0,0.35)] " + className}>{children}</span>
);

const Art = ({ box = "0 0 54 54", children }) => <svg viewBox={box} className="h-full w-full">{children}</svg>;

const FinderArt = () => (
  <Art>
    <defs><linearGradient id="fnd" x1="0" y1="0" x2="0" y2="1"><stop stopColor="#5cc5fb" /><stop offset="1" stopColor="#3a6be8" /></linearGradient></defs>
    <rect width="54" height="54" fill="#e6e9f0" /><path d="M0 0h30c-5 10-7 20-7 31h8c0 8 1 16 3 23H0z" fill="url(#fnd)" />
    <path d="M14 15v5M40 15v5" stroke="#1d3350" strokeWidth="2.600" strokeLinecap="round" /><path d="M11 34c8 10 24 10 32 0" fill="none" stroke="#1b2d48" strokeWidth="2.400" strokeLinecap="round" />
  </Art>
);

const petals = ["#f39b38", "#eedb3f", "#a8cc4b", "#63b488", "#6ea9df", "#8f7dc8", "#c9688c", "#ea5f45"];
const launch = ["#76d552", "#f0c53a", "#f0922f", "#d9352d", "#9aa0a0", "#e8475b", "#9a45d8", "#3f8ef0", "#5ecfa5"];

const VSCodeTile = () => <Tile className="bg-white"><VscVscode className="h-[38px] w-[38px] text-[#2c7fd0]" /></Tile>;

const apps = [
  [<Tile><FinderArt /></Tile>, true],
  [<Tile className="bg-[#cfd4dc]"><Art>{launch.map((c, i) => <rect key={c} x={9 + (i % 3) * 13} y={9 + Math.floor(i / 3) * 13} width="10" height="10" rx="2.500" fill={c} />)}</Art></Tile>],
  [<Tile className="flex-col bg-[#f8f7f5]"><span className="flex h-[17px] w-full items-center justify-center bg-[#e4574b] text-[12px] font-semibold text-white">EKİ</span><span className="flex grow items-center text-[33px] font-light leading-none tracking-tight text-[#222]">16</span></Tile>],
  [<Tile className="bg-white"><Art><path d="M14 9h31v9H14z" fill="#4a93e2" /><path d="M14 18h31v9H14z" fill="#3371cf" /><path d="M14 27h31v9H14z" fill="#2a59b8" /><path d="M14 36h31v9H14z" fill="#203f8c" /><rect x="5" y="16" width="20" height="20" rx="2" fill="#2450a8" /><text x="8" y="31.500" fontSize="15" fontWeight="700" fill="#fff">W</text></Art></Tile>],
  [<Tile className="bg-[linear-gradient(#fff,#d5d5d8)]"><Art><circle cx="27" cy="27" r="23" fill="#3b8ee6" /><circle cx="27" cy="27" r="20.500" fill="none" stroke="#bcdcf8" strokeWidth="3" strokeDasharray="1 1.600" /><path d="M43 12L30 30l-6-5z" fill="#e0463c" /><path d="M11 42l13-17 6 5z" fill="#f4f4f4" /></Art></Tile>],
  [<Tile className="bg-[linear-gradient(#3f7af0,#5cc3fb)]"><Art><rect x="8" y="15" width="38" height="24" rx="3" fill="#f1f1f1" /><path d="M9 16l18 15 18-15M9 38l13-12M45 38L32 26" fill="none" stroke="#a9aeb5" strokeWidth="1.500" /></Art></Tile>],
  [<Tile className="bg-[linear-gradient(#86ee7d,#4fbb48)]"><FaWhatsapp className="h-[43px] w-[43px] text-white" /></Tile>, true],
  [<Tile className="bg-[#f7f9fc]"><Art><path d="M9 20L28 8l8 10-20 14z" fill="#55a8f4" /><path d="M14 20l16-12q4-2 7 2l-4 10-16 12z" fill="#3f8bea" /><path d="M28 9q4-3 8 1l9 12q2 4-2 6L24 42V30l10-8z" fill="#4c46c8" /><path d="M14 28l16 16 15-16v13q0 5-5 5H20q-6 0-6-6z" fill="#4fb4f6" /><path d="M45 27v14q0 5-5 5H26z" fill="#2f78e6" /><rect x="6" y="26" width="19" height="19" rx="4" fill="#1c63cf" /><circle cx="15.500" cy="35.500" r="4.500" fill="none" stroke="#fff" strokeWidth="2.600" /></Art></Tile>, true],
  [<Tile className="bg-white"><Art>{petals.map((c, i) => <ellipse key={c} cx="27" cy="14.500" rx="7.500" ry="11" fill={c} opacity=".85" transform={`rotate(${i * 45} 27 27)`} />)}</Art></Tile>],
  [<Tile className="border-[3px] border-[#b7c0c7] bg-[#222] shadow-[inset_0_0_0_3px_#000]"><span className="-mt-[20px] -ml-[12px] font-['Liberation_Mono'] text-[17px] font-bold leading-none tracking-tighter text-white">&gt;_</span></Tile>, true],
  [<Tile className="bg-[linear-gradient(#41a5f2,#2359dc)]"><Art><g stroke="#fff" strokeWidth="4" strokeLinecap="round"><path d="M25 13l15 27M30 13L16 38M10 33h22M39 33h6" /></g></Art></Tile>],
  [<Tile className="bg-[linear-gradient(#cdd6dc,#8a8683)]"><Art><circle cx="27" cy="27" r="22.500" fill="#343434" /><circle cx="27" cy="27" r="18.500" fill="none" stroke="#a9a9a9" strokeWidth="2.400" /><circle cx="27" cy="27" r="21.500" fill="none" stroke="#8c8c8c" strokeWidth="2" strokeDasharray="1.500 1.500" /><circle cx="27" cy="27" r="11" fill="none" stroke="#777" strokeWidth="3" /><path d="M27 27h18M27 27l-9-16M27 27l-9 16" stroke="#b5b5b5" strokeWidth="2.600" /></Art></Tile>],
  [<VSCodeTile />, true],
  [<Tile className="bg-[#e0503f]"><Art><path d="M20 13l14 14-14 14L6 27z" fill="#fff" /><path d="M30 13l3 0 14 14-14 14h-3l10-14z" fill="#fff" /></Art></Tile>],
  [<span className="h-[60px] w-[66px]"><Art box="0 0 66 60"><circle cx="30" cy="30" r="29" fill="#e99a3a" /><circle cx="37" cy="30" r="29" fill="#2b2350" /><circle cx="37" cy="33" r="16" fill="#3f3482" /><path d="M9 20.500h56v4H9zM8 28h58v4H8zM9 35.500h56v4H9z" fill="#fff" /></Art></span>],
  [<Tile className="flex-col bg-[#f4f3f0]"><Art><rect width="54" height="14" fill="#f6cb45" /><path d="M0 16.500h54" stroke="#aaa" strokeDasharray="1 2" strokeWidth="1.200" /><path d="M0 27h54M0 41h54" stroke="#d5d4d0" strokeWidth="1.200" /></Art></Tile>],
  [<Tile className="bg-white"><DiVisualstudio className="h-[50px] w-[50px] text-[#8a5cc8]" /></Tile>],
  [<Tile className="bg-black"><FaSpotify className="h-[43px] w-[43px] text-[#62d662]" /></Tile>],
  [<span className="h-[62px] w-[54px]"><Art box="0 0 54 62"><rect y="4" width="53" height="54" rx="10" fill="#fbfbfa" /><path d="M0 20h53M0 26h53M0 32h53M0 38h53M0 44h53M0 50h53" stroke="#c6c6c6" /><path d="M8 4v54" stroke="#eaa" /><path d="M48 1L22 55l-2 7" stroke="#72818f" strokeWidth="4.500" /><path d="M48 1L23 53" stroke="#c4d3df" strokeWidth="2" /></Art></span>],
  [<Tile className="bg-[linear-gradient(#7a83f2,#5560ea)]"><FaDiscord className="h-[40px] w-[40px] text-white" /></Tile>],
  [<Tile className="bg-white"><Art><circle cx="27" cy="27" r="23" fill="#f2c04a" /><path d="M27 16h20A23 23 0 0 0 7 15.500L17 32z" fill="#d8493b" /><path d="M7 15.500A23 23 0 0 0 27 50l9-17-19-1z" fill="#4da157" /><circle cx="27" cy="27" r="11" fill="#fff" /><circle cx="27" cy="27" r="9" fill="#3f7de8" /></Art></Tile>, true],
  [<span className="h-[58px] w-[55px]"><Art box="0 0 55 58"><rect y="2" width="53" height="54" rx="12" fill="#eef0f2" /><rect x="4" y="6" width="45" height="26" rx="4" fill="#8fb3e8" /><path d="M4 31h45v8H4z" fill="#20345f" /><path d="M4 39h45v12H10l-6-3z" fill="#7f93a9" /><path d="M4 44l8-4 8 8 6-3v6H10z" fill="#d6c3a0" /><path d="M30 38h16l6 18c0 2-28 2-28 0z" fill="#dfe2e4" stroke="#9aa0a6" /><rect x="27" y="28" width="24" height="11" rx="3" fill="#151515" /><path d="M35 42l5 3-4 5z" fill="#666" /></Art></span>],
  [<span className="h-[66px] w-[60px]"><Art box="0 0 60 66"><defs><linearGradient id="db"><stop stopColor="#8d8d8d" /><stop offset=".4" stopColor="#e2e2e2" /><stop offset="1" stopColor="#777" /></linearGradient></defs>{[38, 21, 4].map((y) => <g key={y}><path d={`M1 ${y + 8}v12c0 9 58 9 58 0v-12z`} fill="url(#db)" /><ellipse cx="30" cy={y + 7} rx="29" ry="8" fill="#c4c4c4" stroke="#7c7c7c" /></g>)}</Art></span>],
  [<Tile className="bg-[#418ee6]"><FaDocker className="h-[40px] w-[40px] text-white" /></Tile>],
  [<Tile className="bg-white"><Art><circle cx="29" cy="14" r="6" fill="#7b83eb" /><circle cx="41" cy="16" r="4.500" fill="#5059c9" /><path d="M36 22h11v15c0 5-5 7-9 6z" fill="#5059c9" /><path d="M18 22h20v14c0 12-20 12-20 0z" fill="#7b83eb" /><rect x="7" y="17" width="20" height="21" rx="2" fill="#4b53bc" /><path d="M12 22h10M17 22v12" stroke="#fff" strokeWidth="2.800" /></Art></Tile>],
  [<Tile className="bg-[#c9cccc]"><Art><rect x="16" y="4" width="23" height="46" rx="4" fill="#17181b" /><path d="M18 6h19v18L18 36z" fill="#e9837a" /><path d="M18 30l19-16v34H18z" fill="#1f5a70" /><path d="M37 6v20L18 40c0-14 8-26 19-34z" fill="#f1c9b8" /><path d="M18 40l19-14v22H18z" fill="#17506b" /><rect x="23" y="6" width="9" height="3" rx="1.500" fill="#111" /></Art></Tile>],
  [<Tile className="bg-[#ef7546]"><Art><g fill="#fff"><circle cx="40" cy="15" r="5" /><path d="M35 19l4 4c-3 8-8 13-14 17l-10 6-1-3 8-9c2-6 6-12 13-15z" /></g><path d="M36 20L20 38" stroke="#ef7546" strokeWidth="1.400" /></Art></Tile>],
  [<span className="h-[54px] w-[34px]"><Art box="0 0 34 54"><path d="M4 15C4-2 30-2 30 14c0 11-13 9-13 23" fill="none" stroke="#c9cdcf" strokeWidth="3.600" /><circle cx="17" cy="49" r="3.300" fill="#c9cdcf" /></Art></span>],
  [<Tile className="bg-white"><Art><defs><linearGradient id="win" x1="0" y1="0" x2="1" y2="1"><stop stopColor="#58b7ee" /><stop offset="1" stopColor="#2a68c4" /></linearGradient></defs><path d="M11 11h15.500v15.500H11zM28 11h15.500v15.500H28zM11 28h15.500v15.500H11zM28 28h15.500v15.500H28z" fill="url(#win)" /></Art></Tile>],
  [<Tile className="bg-[linear-gradient(#4b4b4b,#0d0d0d)]"><Art><circle cx="28" cy="12" r="8" fill="none" stroke="#8e8a80" strokeWidth="2" /><circle cx="23" cy="25" r="7.500" fill="#c9d1d3" /><circle cx="33" cy="23" r="6" fill="#aab3b5" /><path d="M20 30l-7 18 5 0 6-17zM27 30l-1 20h4l1-20zM33 28l5 20h5l-5-20z" fill="#b3aea2" /></Art></Tile>],
  [<Tile className="bg-[linear-gradient(100deg,#8a3fa0_48%,#4d2378_52%,#6a2f94)]"><Art><g fill="none" stroke="#fff" strokeWidth="6"><path d="M16 19C16 5 38 5 38 19M16 35c0 15 22 15 22 0M16 24v11M38 24v11" /></g><circle cx="27" cy="20" r="3.500" fill="#fff" /></Art></Tile>],
  [<span className="h-[60px] w-[56px]"><Art box="0 0 56 60"><path d="M28 0l27 15v30L28 60 1 45V15z" fill="#1c1c1c" /><path d="M28 0L1 15l27 15 27-15z" fill="#4f4f4f" /><path d="M28 30L1 15v30l27 15z" fill="#2b2b2b" /><path d="M28 30l27-15v30L28 60z" fill="#080808" /></Art></span>, false, <SiUnity className="h-[38px] w-[38px] text-white" />],
  [<span className="flex h-[65px] w-[64px] items-center justify-center overflow-hidden rounded-[9px] border border-[#7d9dbb] bg-[linear-gradient(#3b689b,#213f60)]"><Art box="0 0 64 64"><path d="M22 47l-5-4C9 32 6 20 8 10c9-3 20 3 26 15 3 9 6 17 12 23l10 5-9 1 9 6M26 54c-3-4-3-9-7-13l-2-6" fill="none" stroke="#f1f4f7" strokeWidth="2" strokeLinejoin="round" /><path d="M43 7c2 5 5 6 8 4l-1-6c6 2 7 7 4 10l5 6-3 2-5-6c-5 1-9-4-8-10z" fill="#fff" /></Art></span>],
];

const recent = [
  [<span className="relative block"><Tile className="bg-[linear-gradient(#7fec78,#4fbd47)]"><Art><rect x="8" y="15" width="26" height="24" rx="6" fill="#f2f7f1" /><path d="M37 24l8-6v18l-8-6z" fill="#d8ecd5" /></Art></Tile><span className="absolute -right-[8px] -top-[8px] flex h-[26px] w-[26px] items-center justify-center rounded-full bg-[#e34b3d] text-[16px] leading-none text-white">2</span></span>],
  [<VSCodeTile />],
  [<span className="relative block"><span className="absolute -bottom-[4px] left-[5px] h-3 w-[11px] bg-[#c93f36]" /><Tile className="relative bg-[#944543] font-['Liberation_Serif'] text-[30px] leading-none tracking-tight text-white">Aa</Tile></span>],
];

const files = [
  [<span className="h-[48px] w-[62px]"><Art box="0 0 62 48"><path d="M0 1h62v36H0z" fill="#ebe5df" /><path d="M0 1h21v36H0z" fill="#f9f9f9" /><path d="M4 6h2v28H4z" fill="#444" /><path d="M8 6h9M8 11h10M8 16h8M8 21h10M8 26h9M8 31h10" stroke="#b9b9b9" /><rect x="46" y="3" width="15" height="20" fill="#6e4d38" /><circle cx="53" cy="12" r="5" fill="#e8dfd2" /><rect x="41" y="28" width="20" height="20" rx="5" fill="#55cc55" /><circle cx="51" cy="38" r="5.500" fill="none" stroke="#fff" strokeWidth="2" /></Art></span>],
  [<span className="h-[46px] w-[62px]"><Art box="0 0 62 46"><path d="M0 1h62v30H0z" fill="#fafafa" /><path d="M0 1h10v30H0z" fill="#dfe4ea" /><path d="M10 1h52v5H10z" fill="#ececec" /><path d="M12 9h48M12 13h22M12 18h48M12 23h48" stroke="#c9ccd0" /><rect x="41" y="26" width="20" height="20" rx="5" fill="#e9edf4" /><path d="M46 26h6c-2 4-2 8-2 12h3l1 8h-8a5 5 0 0 1-5-5V31a5 5 0 0 1 5-5z" fill="#3b86f0" /><path d="M45 39c3 3 9 3 12 0" fill="none" stroke="#1b2d48" strokeWidth="1.400" /></Art></span>],
  [<span className="h-[62px] w-[48px]"><Art box="0 0 48 62"><path d="M2 9l5 48c1 5 33 5 34 0l5-48z" fill="#e4e4e4" /><path d="M14 16l3 40M31 14l-2 42" stroke="#cfcfcf" strokeWidth="3" /><ellipse cx="24" cy="9" rx="22" ry="6" fill="#5b5b5b" /><path d="M5 9l6-7 6 4 5-6 6 5 7-4 3 6 5 2-6 5H10z" fill="#f0efec" /><path d="M12 5l4 5M27 4l5 7M20 8l2 4" stroke="#39424e" strokeWidth="2.400" /><path d="M35 4l3 6" stroke="#c35b40" strokeWidth="2.400" /></Art></span>],
];

function DockItem({ item: [art, running, over] }) {
  return (
    <span className="relative flex h-full w-[69.330px] shrink-0 items-center justify-center pb-[7px]">
      {art}
      {over && <span className="absolute inset-0 flex items-center justify-center pb-[7px]">{over}</span>}
      {running && <span className="absolute bottom-[2px] h-2 w-2 rounded-full bg-[#0a0f18]" />}
    </span>
  );
}

const Rule = () => <span className="flex w-[30px] shrink-0 justify-center"><span className="h-16 w-[2px] bg-[#53616e]" /></span>;

function Dock() {
  return (
    <div className="relative mx-[52px] mt-[6px] flex h-[88px] items-center rounded-[26px] border-2 border-[#98a5af] bg-[linear-gradient(to_right,#6e8192,#718493_25%,#7a8b95_45%,#7c8995_58%,#899191_68%,#7d8d97_74%,#758696_80%,#82919c_90%,#7f909e)] bg-origin-border pl-[3px]">
      {apps.map((a, i) => <DockItem key={i} item={a} />)}
      <Rule />
      {recent.map((a, i) => <DockItem key={i} item={a} />)}
      <Rule />
      {files.map((a, i) => <DockItem key={i} item={a} />)}
    </div>
  );
}

/* Dark ocean texture behind the window and the dock */
function Wallpaper() {
  return (
    <svg className="absolute bottom-0 left-0 h-[140px] w-full" preserveAspectRatio="none">
      <filter id="sea" x="0" y="0" width="100%" height="100%" colorInterpolationFilters="sRGB">
        <feTurbulence type="fractalNoise" baseFrequency="0.018 0.045" numOctaves="4" seed="7" />
        <feColorMatrix values="0.42 0 0 0 -0.03  0.38 0 0 0 0.05  0.34 0 0 0 0.13  0 0 0 0 1" />
      </filter>
      <rect width="100%" height="100%" filter="url(#sea)" />
    </svg>
  );
}

export default function App() {
  return (
    <div className="relative flex h-[1800px] w-[2880px] flex-col overflow-hidden bg-[#090909] font-['Inter',sans-serif]">
      <Wallpaper />
      <div className="relative flex flex-col"><MenuBar /></div>
      <div className="relative flex h-[1644px] shrink-0 flex-col overflow-hidden rounded-[22px] border-t border-[#8290d0] bg-[#0e2896]">
        <TabStrip />
        <div className="h-[162px] shrink-0 rounded-t-[18px] border-b-2 border-[#4a68e8] bg-[#173de6]">
          <Toolbar />
          <Bookmarks />
        </div>
        <Page />
      </div>
      <Dock />
    </div>
  );
}
